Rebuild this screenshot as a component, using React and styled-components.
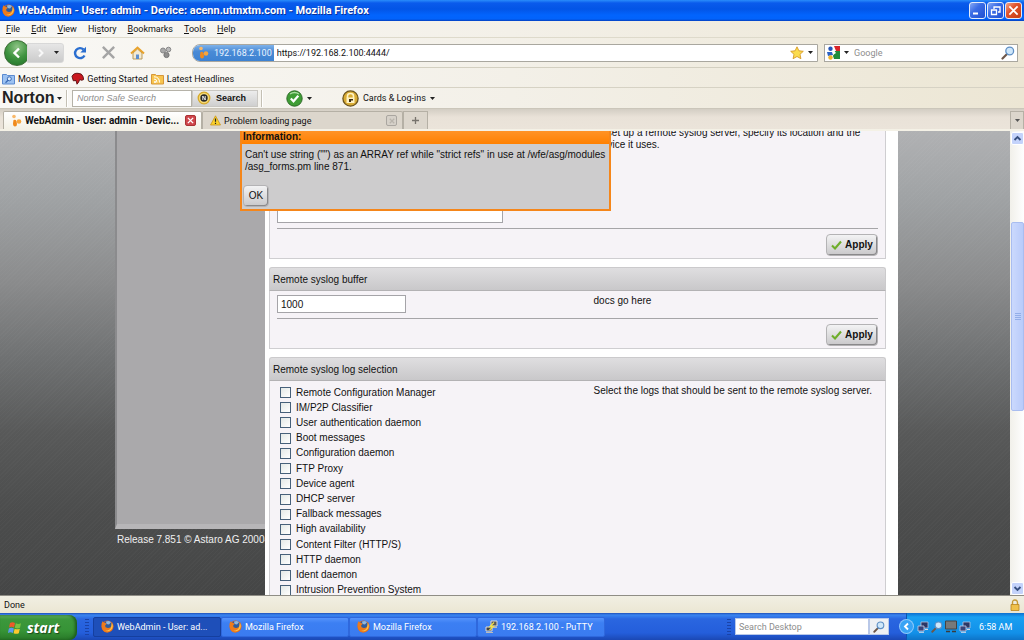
import React from "react";
import styled, { createGlobalStyle, css } from "styled-components";

const UI = `Roboto, "Liberation Sans", sans-serif`;
const WEB = `"Liberation Sans", Arial, sans-serif`;

const Global = createGlobalStyle`
  * { box-sizing: border-box; }
  body { margin: 0; font: 9px/12px ${UI}; color: #111; overflow: hidden; }
  button, input { font: inherit; color: inherit; margin: 0; }
  button { padding: 0; border: 0; background: none; display: inline-flex; align-items: center; white-space: nowrap; }
  svg { display: block; flex: none; }
  a { color: inherit; text-decoration: none; }
`;

/* ---------- window ---------- */
const Window = styled.div`
  display: flex;
  flex-direction: column;
  height: 100vh;
  background: #ece9d8;
`;
const TitleBar = styled.header`
  display: flex;
  align-items: center;
  gap: 3px;
  flex: none;
  height: 21px;
  padding: 0 2px;
  background: linear-gradient(#2a8dfb 0, #0a5bec 3px, #0355e6 9px, #0264fd 15px, #0263fb 19px, #0440c0 21px);
`;
const WindowTitle = styled.h1`
  flex: 1;
  margin: 0;
  font: bold 11px/14px ${UI};
  color: #fff;
  text-shadow: 1px 1px 0 #0a2f9a;
`;
const WindowButton = styled.button`
  justify-content: center;
  width: 17px;
  height: 17px;
  margin-left: -2px;
  border: 1px solid #e4ecfb;
  border-radius: 3px;
  background: ${(p) =>
    p.$close
      ? "linear-gradient(135deg, #f0a58b, #e0532b 40%, #c63c12)"
      : "linear-gradient(135deg, #86a8f4, #3a6ce6 40%, #1f4fd0)"};
`;

/* ---------- browser bars ---------- */
const chrome = css`
  background: linear-gradient(90deg, #f9f8f5, #f3f0e8 50%, #ece6d4);
`;
const MenuBar = styled.nav`
  ${chrome}
  display: flex;
  align-items: center;
  gap: 11px;
  flex: none;
  height: 17px;
  padding: 0 6px;
  border-bottom: 1px solid #dedacb;
`;
const NavBar = styled.div`
  ${chrome}
  display: flex;
  align-items: center;
  flex: none;
  height: 30px;
  padding: 0 6px 0 4px;
  border-bottom: 1px solid #d3cfc0;
`;
const BackForward = styled.div`
  display: flex;
  align-items: center;
  width: 60px;
  margin-right: 9px;
`;
const BackButton = styled.button`
  justify-content: center;
  width: 26px;
  height: 26px;
  border: 1px solid #3b6b35;
  border-radius: 50%;
  background: radial-gradient(circle at 50% 25%, #8fc486, #3f9440 50%, #1f7026);
`;
const ForwardButton = styled.button`
  flex: 1;
  justify-content: space-between;
  height: 20px;
  margin-left: -3px;
  padding: 0 4px 0 9px;
  border: 1px solid #d8d8d8;
  border-radius: 0 3px 3px 0;
  background: linear-gradient(#e6e6e6, #cbcbcb);
`;
const NavTools = styled.div`
  display: flex;
  align-items: center;
  gap: 14px;
  margin-right: 20px;
`;
const UrlBar = styled.div`
  display: flex;
  align-items: center;
  flex: 1;
  height: 18px;
  border: 1px solid #a9a79f;
  border-radius: 8px 0 0 8px;
  background: #fff;
  overflow: hidden;
`;
const SiteIdentity = styled.button`
  gap: 5px;
  height: 16px;
  padding: 0 2px 0 5px;
  color: #e9f3ff;
  background: linear-gradient(#7fb2ea, #4a8bd6 40%, #3d82d2);
`;
const UrlInput = styled.input`
  flex: 1;
  min-width: 0;
  padding: 0 3px;
  border: 0;
  background: none;
`;
const DropButton = styled.button`
  padding: 4px;
`;
const SearchBox = styled.div`
  display: flex;
  align-items: center;
  flex: 0 0 194px;
  height: 18px;
  margin-left: 6px;
  padding: 0 2px;
  border: 1px solid #a9a79f;
  background: #fff;
`;
const SearchInput = styled.input`
  flex: 1;
  min-width: 0;
  padding: 0 1px;
  border: 0;
  background: none;
  &::placeholder { color: #8d8d8d; opacity: 1; }
`;
const BookmarkBar = styled.nav`
  ${chrome}
  display: flex;
  align-items: center;
  gap: 3px;
  flex: none;
  height: 20px;
  padding: 2px 2px 0;
  border-bottom: 1px solid #d6d2c4;
`;
const Bookmark = styled.a`
  display: flex;
  align-items: center;
  gap: 3px;
`;
const NortonBar = styled.div`
  ${chrome}
  display: flex;
  align-items: center;
  flex: none;
  height: 21px;
  padding: 0 2px;
  border-bottom: 1px solid #cbc6ba;
`;
const NortonLogo = styled.button`
  gap: 3px;
  width: 64px;
  font: bold 16px/18px ${WEB};
  color: #222;
`;
const Divider = styled.span`
  flex: none;
  width: 2px;
  height: 17px;
  border-left: 1px solid #c4c0b4;
  border-right: 1px solid #fff;
`;
const SafeSearch = styled.input`
  width: 120px;
  height: 17px;
  margin-left: 4px;
  padding: 0 4px;
  border: 1px solid #b5b2a8;
  background: #fff;
  font: italic 9px/12px ${WEB};
  &::placeholder { color: #8d8d8d; opacity: 1; }
`;
const SafeButton = styled.button`
  gap: 5px;
  width: 66px;
  height: 17px;
  margin-right: 3px;
  padding: 0 4px;
  border: 1px solid #c9c7c2;
  background: linear-gradient(#ececec, #cfcfcf);
  font: bold 9px/12px ${WEB};
`;
const NortonItem = styled.button`
  gap: 4px;
  margin-left: ${(p) => p.$gap}px;
`;

/* ---------- tabs ---------- */
const TabStrip = styled.div`
  display: flex;
  align-items: flex-end;
  flex: none;
  height: 22px;
  padding: 2px 0 0 3px;
  border-bottom: 2px solid #f4f1e6;
  background: linear-gradient(#d3cec4, #e9e2d8 8px, #ebe4da);
`;
const Tab = styled.div`
  display: flex;
  align-items: center;
  gap: 3px;
  width: ${(p) => (p.$active ? 199 : 201)}px;
  height: 18px;
  padding: 0 5px 0 7px;
  border: 1px solid #b5b0a5;
  border-bottom: 0;
  border-radius: 2px 2px 0 0;
  background: ${(p) => (p.$active ? "linear-gradient(#fff, #f4f1e6)" : "#dcd6cc")};
  font: ${(p) => (p.$active ? "bold 10px/12px" : "9px/12px")} ${UI};
`;
const TabLabel = styled.button`
  flex: 1;
  font: inherit;
`;
const CloseTab = styled.button`
  justify-content: center;
  width: 11px;
  height: 11px;
  border: 1px solid ${(p) => (p.$active ? "#a33" : "#aaa6a0")};
  border-radius: 2px;
  background: ${(p) => (p.$active ? "#d0464c" : "#d6d1c9")};
`;
const StripButton = styled.button`
  justify-content: center;
  width: ${(p) => p.$w}px;
  height: 18px;
  border: 1px solid #b5b0a5;
  border-bottom: 0;
  background: #dcd6cc;
`;
const Push = styled.span`
  flex: 1;
`;

/* ---------- web page ---------- */
const Viewport = styled.div`
  display: flex;
  flex: 1;
  min-height: 0;
  overflow: hidden;
`;
const WebPage = styled.div`
  position: relative;
  display: flex;
  justify-content: center;
  flex: 1;
  padding: 0 112px 0 115px;
  overflow: hidden;
  font: 10px/12px ${WEB};
  color: #111;
  background:
    repeating-linear-gradient(135deg, rgba(255, 255, 255, 0.02) 0 1px, transparent 1px 3px),
    linear-gradient(#b0b1b3, #a0a3a5 14%, #8b8c8d 32%, #6f7172 49%, #585959 65%, #4c4d4d 82%, #454646);
`;
const Sidebar = styled.aside`
  flex: 0 0 150px;
  min-width: 0;
  color: #f0f0f0;
  white-space: nowrap;
`;
const SidebarPanel = styled.div`
  height: 398px;
  margin-bottom: 5px;
  border-left: 2px solid #8b8b8d;
  border-bottom: 5px solid #b7b6b8;
  background: #aaa9ab;
`;
const Release = styled.p`
  margin: 0 0 0 2px;
`;
const Main = styled.main`
  display: flex;
  flex-direction: column;
  gap: 8px;
  flex: 1;
  min-width: 0;
  margin-top: -8px;
  padding: 0 12px 0 4px;
  background: #fff;
`;
const Panel = styled.section`
  flex: none;
`;
const PanelTitle = styled.h2`
  height: 24px;
  margin: 0;
  padding: 6px 3px;
  border: 1px solid #cbcacc;
  border-bottom-color: #b3b2b4;
  border-radius: 3px 3px 0 0;
  background: linear-gradient(#dfdee0, #c9c8ca);
  font: 10px/12px ${WEB};
`;
const PanelBody = styled.div`
  padding: 0 7px;
  border: 1px solid #cfced1;
  border-top: 0;
  background: #f6f3f7;
`;
const Fields = styled.div`
  display: grid;
  grid-template-columns: 79fr 71fr;
  min-height: ${(p) => p.$min || 0}px;
  padding: 4px 0 5px;
`;
const Help = styled.p`
  margin: 0;
`;
const TextInput = styled.input`
  align-self: end;
  width: ${(p) => p.$w}px;
  height: 18px;
  padding: 0 3px;
  border: 1px solid #a5a4a8;
  background: #fff;
`;
const PanelFooter = styled.footer`
  display: flex;
  justify-content: flex-end;
  padding: 5px 0 2px;
  border-top: 1px solid #a6a5a8;
`;
const webButton = css`
  justify-content: center;
  gap: 3px;
  height: 22px;
  border: 1px solid #b4b3b5;
  border-radius: 4px;
  box-shadow: inset -1px -1px 0 #8a898b;
  background: linear-gradient(#f3f3f4, #c9c8ca);
`;
const ApplyButton = styled.button`
  ${webButton}
  width: 52px;
  font-weight: bold;
`;
const OkButton = styled.button`
  ${webButton}
  width: 26px;
`;
const LogList = styled.ul`
  display: flex;
  flex-direction: column;
  justify-content: space-between;
  height: 213px;
  margin: 0;
  padding: 0 0 0 3px;
  list-style: none;
`;
const LogRow = styled.label`
  display: flex;
  align-items: center;
  gap: 5px;
  height: 15px;
`;
const CheckBox = styled.input`
  appearance: none;
  width: 11px;
  height: 11px;
  border: 1px solid #46607a;
  background: linear-gradient(135deg, #e3e8e6, #fff);
`;
const Dialog = styled.div`
  position: absolute;
  top: 0;
  left: 240px;
  min-width: 371px;
  border: 2px solid #f5861a;
  border-top: 0;
  background: #cdcccd;
  white-space: nowrap;
`;
const DialogTitle = styled.h2`
  height: 13px;
  margin: 0;
  padding: 0 1px;
  background: linear-gradient(#ff9326, #ff8000);
  font: bold 10px/11px ${WEB};
`;
const DialogBody = styled.div`
  padding: 5px 1px 2px;
`;
const DialogText = styled.p`
  margin: 0 0 12px;
  padding: 0 0 0 2px;
`;

/* ---------- scroll bar ---------- */
const ScrollBar = styled.div`
  display: flex;
  flex-direction: column;
  flex: 0 0 14px;
  padding: 1px 0 0 1px;
  background: linear-gradient(90deg, #f1f0ea, #fefefe);
`;
const ScrollButton = styled.button`
  justify-content: center;
  flex: none;
  width: 13px;
  height: 13px;
  border: 1px solid #fff;
  border-radius: 2px;
  background: #c4d3fb;
`;
const ScrollSpace = styled.span`
  flex: ${(p) => p.$grow} 0 0;
`;
const ScrollThumb = styled.div`
  display: flex;
  align-items: center;
  justify-content: center;
  flex: 188 0 0;
  border: 1px solid #a9bdf0;
  border-radius: 2px;
  background: linear-gradient(90deg, #cbd9fd, #b9cbfa);
`;

/* ---------- status bar and task bar ---------- */
const StatusBar = styled.footer`
  display: flex;
  align-items: center;
  justify-content: space-between;
  flex: none;
  height: 18px;
  padding: 0 4px;
  border-top: 1px solid #8f8d85;
  background: linear-gradient(#f1efe3, #ebe6d3);
`;
const TaskBar = styled.div`
  display: flex;
  align-items: center;
  flex: none;
  height: 27px;
  color: #fff;
  background: linear-gradient(#1f50b8 0, #3a85f0 2px, #2a66e0 6px, #245edb 20px, #1b48b4);
`;
const StartButton = styled.button`
  gap: 5px;
  width: 77px;
  height: 25px;
  align-self: flex-end;
  padding: 0 8px;
  border-radius: 0 8px 8px 0;
  background: linear-gradient(#64b364 0, #3c983c 4px, #369336 16px, #287828);
  box-shadow: inset -2px 0 3px #1c5a1c;
  font: italic bold 14px/16px "Open Sans", sans-serif;
  text-shadow: 1px 1px 1px #1a4a1a;
`;
const Grip = styled.span`
  flex: none;
  width: 4px;
  height: 16px;
  margin: 0 4px 0 8px;
  background: repeating-linear-gradient(#1a43a8 0 1px, transparent 1px 3px);
`;
const Task = styled.button`
  gap: 3px;
  flex: 0 1 128px;
  height: 20px;
  padding: 0 7px;
  border: 1px solid ${(p) => (p.$active ? "#153f9f" : "#2f68dd")};
  border-radius: 2px;
  background: ${(p) => (p.$active ? "#1e4fb9" : "linear-gradient(#5593fb, #3c7ff3 5px, #3a7bf0)")};
`;
const DesktopSearch = styled.div`
  display: flex;
  height: 17px;
`;
const DesktopInput = styled.input`
  width: 134px;
  padding: 0 3px;
  border: 1px solid #b9c8e8;
  background: #fff;
  color: #333;
  &::placeholder { color: #8d8d8d; opacity: 1; }
`;
const DesktopButton = styled.button`
  justify-content: center;
  width: 20px;
  border: 1px solid #b9c8e8;
  background: #eef0f4;
`;
const Tray = styled.div`
  display: flex;
  align-items: center;
  gap: 2px;
  align-self: stretch;
  width: 118px;
  margin-left: 17px;
  border-left: 1px solid #0d55b0;
  background: linear-gradient(#0d6fd0 0, #19a0f2 4px, #1290e8 20px, #0e74c8);
`;
const TrayToggle = styled.button`
  justify-content: center;
  width: 13px;
  height: 13px;
  margin-left: -7px;
  margin-right: 2px;
  border-radius: 50%;
  background: #38a3f5;
  box-shadow: 0 0 0 1px #8cc9fa;
`;
const Clock = styled.time`
  margin-left: 6px;
`;

/* ---------- icons ---------- */
const Caret = ({ c = "#222" }) => (
  <svg width="5" height="3" viewBox="0 0 5 3"><path d="M0 0h5L2.500 3z" fill={c} /></svg>
);
const Firefox = () => (
  <svg width="13" height="13" viewBox="0 0 13 13">
    <circle cx="6.500" cy="6.500" r="6" fill="#e2651a" />
    <circle cx="6.800" cy="5" r="3.900" fill="#2f5c9c" />
    <path d="M5 1.500q3-1.300 5 .8L8 4.500 5.500 4z" fill="#8fb6dd" />
    <path d="M.6 3.500 1.800 1l1 1.800q2 0 2.800 1.200L4.300 5.200q-.6 2 1.700 2.600Q8.500 9 11 5.500l.3-2.800q2.200 4.200-.5 7.400Q8 13.300 3.700 12 .2 10 .6 3.500z" fill="#ed7b1c" />
    <path d="M10.800 2.800q2.200 4.200-1 7.200-3 2.300-6 .6 5 .4 6.300-3.400z" fill="#fbc34a" />
  </svg>
);
const Blobs = () => (
  <svg width="11" height="13" viewBox="0 0 11 13">
    <circle cx="3" cy="2.500" r="1.800" fill="#f9b86a" />
    <path d="M2.500 6q2-1 3 1l.5 3q0 2.500-2 2.500T2 9.500z" fill="#f08a1d" />
    <circle cx="8" cy="7.500" r="2.300" fill="#f7a53d" />
  </svg>
);
const Magnifier = ({ s = 14 }) => (
  <svg width={s} height={s} viewBox="0 0 14 14">
    <path d="M6 8 1.500 12.500" stroke="#6d5648" strokeWidth="2.200" strokeLinecap="round" />
    <circle cx="8.700" cy="5" r="3.900" fill="#cfe7fa" stroke="#5f8fc4" strokeWidth="1.300" />
  </svg>
);
const Monitors = () => (
  <svg width="12" height="12" viewBox="0 0 12 12">
    <path d="M4 1h7v6H4z" fill="#2b3766" stroke="#b9c4e0" strokeWidth=".8" />
    <path d="M1 5h6v5H1z" fill="#37447a" stroke="#c9d1ea" strokeWidth=".8" />
    <path d="M2 11.300h5M8 8.500h3" stroke="#d5d9e6" />
  </svg>
);
const Tick = () => (
  <svg width="11" height="10" viewBox="0 0 11 10"><path d="M1 5.500 4 8.500 10 1.500" fill="none" stroke="#6fae2b" strokeWidth="2.100" /></svg>
);
const Cross = ({ s = 7, c = "#fff", w = 1.6 }) => (
  <svg width={s} height={s} viewBox="0 0 8 8"><path d="M1 1l6 6M7 1 1 7" stroke={c} strokeWidth={w} /></svg>
);
const Chevron = ({ d, c = "#38507f" }) => (
  <svg width="9" height="9" viewBox="0 0 9 9"><path d={d} fill="none" stroke={c} strokeWidth="1.900" /></svg>
);

const Apply = () => (
  <ApplyButton type="button"><Tick />Apply</ApplyButton>
);

const menus = ["File", "Edit", "View", "History", "Bookmarks", "Tools", "Help"];
const logs = [
  "Remote Configuration Manager", "IM/P2P Classifier", "User authentication daemon", "Boot messages",
  "Configuration daemon", "FTP Proxy", "Device agent", "DHCP server", "Fallback messages",
  "High availability", "Content Filter (HTTP/S)", "HTTP daemon", "Ident daemon", "Intrusion Prevention System",
];
const Mnemonic = ({ text }) => {
  const at = text === "History" ? 2 : 0;
  return <span>{text.slice(0, at)}<u>{text[at]}</u>{text.slice(at + 1)}</span>;
};

export default function App() {
  return (
    <Window>
      <Global />
      <TitleBar>
        <Firefox />
        <WindowTitle>WebAdmin - User: admin - Device: acenn.utmxtm.com - Mozilla Firefox</WindowTitle>
        <WindowButton aria-label="Minimize">
          <svg width="11" height="11" viewBox="0 0 11 11"><path d="M1 8.500h5" stroke="#fff" strokeWidth="2" /></svg>
        </WindowButton>
        <WindowButton aria-label="Restore">
          <svg width="11" height="11" viewBox="0 0 11 11">
            <path d="M4 4V2h6v5H8" fill="none" stroke="#fff" strokeWidth="1.300" />
            <path d="M1.500 5h5v4.500h-5z" fill="none" stroke="#fff" strokeWidth="1.300" />
          </svg>
        </WindowButton>
        <WindowButton $close aria-label="Close"><Cross s={11} w={1.3} /></WindowButton>
      </TitleBar>

      <MenuBar>
        {menus.map((m) => <button key={m} type="button"><Mnemonic text={m} /></button>)}
      </MenuBar>

      <NavBar>
        <BackForward>
          <BackButton aria-label="Back">
            <svg width="12" height="12" viewBox="0 0 12 12"><path d="M8 1.500 3.500 6 8 10.500" fill="none" stroke="#fff" strokeWidth="2.400" /></svg>
          </BackButton>
          <ForwardButton aria-label="Forward">
            <svg width="8" height="10" viewBox="0 0 8 10"><path d="M2 1.500 5.500 5 2 8.500" fill="none" stroke="#f8f8f8" strokeWidth="2" /></svg>
            <Caret />
          </ForwardButton>
        </BackForward>
        <NavTools>
          <button aria-label="Reload">
            <svg width="14" height="14" viewBox="0 0 14 14">
              <path d="M11.500 9.500A5 5 0 1 1 10.500 3.500" fill="none" stroke="#2b6fd0" strokeWidth="2.400" />
              <path d="M13 .8V6.500H7.300z" fill="#2b6fd0" />
            </svg>
          </button>
          <button aria-label="Stop"><Cross s={15} c="#a5a5a5" w={1.3} /></button>
          <button aria-label="Home">
            <svg width="15" height="14" viewBox="0 0 15 14">
              <path d="M3 7v6h9V7L7.500 3z" fill="#f4ead2" stroke="#b79a5c" />
              <path d="M1 7.500 7.500 1.500 14 7.500" fill="none" stroke="#e9a32c" strokeWidth="1.900" />
              <path d="M6 8.500h3V13H6z" fill="#5d8fd0" />
            </svg>
          </button>
          <button aria-label="Add-ons">
            <svg width="13" height="13" viewBox="0 0 13 13">
              <circle cx="4" cy="4.500" r="2.500" fill="#a9a9a9" stroke="#888" />
              <circle cx="9.500" cy="3.500" r="2.300" fill="#b9b9b9" stroke="#888" />
              <circle cx="7.500" cy="9" r="2.600" fill="#8e8e8e" stroke="#777" />
            </svg>
          </button>
        </NavTools>
        <UrlBar>
          <SiteIdentity type="button"><Blobs />192.168.2.100</SiteIdentity>
          <UrlInput aria-label="Address" defaultValue="https://192.168.2.100:4444/" />
          <button aria-label="Bookmark this page">
            <svg width="14" height="14" viewBox="0 0 14 14">
              <path d="m7 .8 1.900 4 4.400.5-3.300 3 .9 4.400L7 10.500l-3.900 2.200.9-4.400-3.300-3 4.400-.5z" fill="#fbdc4e" stroke="#d79a26" strokeWidth=".9" />
            </svg>
          </button>
          <DropButton aria-label="Show history"><Caret /></DropButton>
        </UrlBar>
        <SearchBox>
          <svg width="13" height="14" viewBox="0 0 13 14">
            <path d="M7 0h6v6L9 5z" fill="#d9252a" />
            <path d="M7.500 5 13 5v8H7l-1-3z" fill="#1f8b3b" />
            <circle cx="3.500" cy="2.800" r="2.200" fill="#2556b8" />
            <path d="M0 6l5 0 1 3-5 1z" fill="#2b62c4" />
            <circle cx="3.500" cy="11.500" r="2.200" fill="#f0b429" />
            <path d="M6 3l3 4-3 2z" fill="#fff" />
          </svg>
          <DropButton aria-label="Choose search engine"><Caret /></DropButton>
          <SearchInput aria-label="Search" placeholder="Google" />
          <button aria-label="Go"><Magnifier /></button>
        </SearchBox>
      </NavBar>

      <BookmarkBar>
        <Bookmark href="#most">
          <svg width="13" height="12" viewBox="0 0 13 12">
            <path d="M.5 1.500h4l1 1h7v8.500H.5z" fill="#9cc2f2" stroke="#5b8ad0" />
            <circle cx="7.300" cy="5.800" r="2" fill="#dcebfc" stroke="#3969b4" />
            <path d="M6 7.200 3.500 9.800" stroke="#3969b4" strokeWidth="1.300" />
          </svg>
          Most Visited
        </Bookmark>
        <Bookmark href="#start">
          <svg width="13" height="13" viewBox="0 0 13 13">
            <path d="M1 4.500Q2.500.8 7 1.300q4 0 5 3.200l.7 3-2 .8-2-.8-1 2.500-1.700 2.200-1-3.700-2.700.3z" fill="#c9181e" stroke="#5a0d10" strokeWidth=".9" />
          </svg>
          Getting Started
        </Bookmark>
        <Bookmark href="#news">
          <svg width="13" height="12" viewBox="0 0 13 12">
            <path d="M.5 1.500h4l1 1h7v8.500H.5z" fill="#f8c54f" stroke="#d6973a" />
            <circle cx="4" cy="9" r="1" fill="#fff" />
            <path d="M3 6q3 0 3 3.500M3 3.800q5.500 0 5.500 5.700" fill="none" stroke="#fff" />
          </svg>
          Latest Headlines
        </Bookmark>
      </BookmarkBar>

      <NortonBar>
        <NortonLogo type="button">Norton<Caret /></NortonLogo>
        <Divider />
        <SafeSearch aria-label="Norton Safe Search" placeholder="Norton Safe Search" />
        <SafeButton type="button">
          <svg width="14" height="14" viewBox="0 0 14 14">
            <circle cx="7" cy="7" r="5.800" fill="#f5d977" stroke="#d7a928" strokeWidth="1.300" />
            <circle cx="7" cy="7" r="3.700" fill="#2a2a2a" />
            <path d="M5.800 9V5l2.400 4V5" fill="none" stroke="#fff" strokeWidth=".9" />
          </svg>
          Search
        </SafeButton>
        <Divider />
        <NortonItem $gap={23} aria-label="Site safety">
          <svg width="17" height="17" viewBox="0 0 17 17">
            <circle cx="8.500" cy="8.500" r="7.700" fill="#3f9d35" stroke="#2c6a26" />
            <path d="M4 4q4.500-3 9 0" stroke="#a9dba0" strokeWidth="1.300" fill="none" />
            <path d="M4.800 8.500 7.500 11.300 12.300 5.800" fill="none" stroke="#fff" strokeWidth="2.200" />
          </svg>
          <Caret />
        </NortonItem>
        <NortonItem $gap={30} type="button">
          <svg width="17" height="17" viewBox="0 0 17 17">
            <circle cx="8.500" cy="8.500" r="7.600" fill="#d9ac35" stroke="#6b531b" strokeWidth="1.300" />
            <path d="M5.500 8V6q0-2.500 3-2.500t3 2.500v2" fill="none" stroke="#fff3c4" strokeWidth="1.600" />
            <path d="M4.500 7.500h8v5.500h-8z" fill="#fff3c4" />
            <path d="M7 9h4v1.500H9V12H7z" fill="#3a2b14" />
          </svg>
          Cards &amp; Log-ins
          <Caret />
        </NortonItem>
      </NortonBar>

      <TabStrip>
        <Tab $active>
          <Blobs />
          <TabLabel type="button">WebAdmin - User: admin - Devic...</TabLabel>
          <CloseTab $active aria-label="Close tab"><Cross s={7} /></CloseTab>
        </Tab>
        <Tab>
          <svg width="11" height="11" viewBox="0 0 11 11">
            <path d="M5.500.8 10.500 10H.5z" fill="#fbd12c" stroke="#c9951a" strokeWidth=".8" />
            <path d="M5.500 3.500v3.300M5.500 7.700V9" stroke="#222" strokeWidth="1.200" />
          </svg>
          <TabLabel type="button">Problem loading page</TabLabel>
          <CloseTab aria-label="Close tab"><Cross s={6} c="#b9b4ac" /></CloseTab>
        </Tab>
        <StripButton $w={25} aria-label="New tab">
          <svg width="9" height="9" viewBox="0 0 9 9"><path d="M4.500 1v7M1 4.500h7" stroke="#77736c" strokeWidth="1.300" /></svg>
        </StripButton>
        <Push />
        <StripButton $w={14} aria-label="List all tabs"><Caret c="#555" /></StripButton>
      </TabStrip>

      <Viewport>
        <WebPage>
          <Sidebar>
            <SidebarPanel />
            <Release>Release 7.851 © Astaro AG 2000-</Release>
          </Sidebar>
          <Main>
            <Panel>
              <PanelBody>
                <Fields $min={105}>
                  <TextInput $w={226} aria-label="Remote syslog server" />
                  <Help>To set up a remote syslog server, specify its location and the service it uses.</Help>
                </Fields>
                <PanelFooter><Apply /></PanelFooter>
              </PanelBody>
            </Panel>
            <Panel>
              <PanelTitle>Remote syslog buffer</PanelTitle>
              <PanelBody>
                <Fields>
                  <TextInput $w={129} aria-label="Remote syslog buffer" defaultValue="1000" />
                  <Help>docs go here</Help>
                </Fields>
                <PanelFooter><Apply /></PanelFooter>
              </PanelBody>
            </Panel>
            <Panel>
              <PanelTitle>Remote syslog log selection</PanelTitle>
              <PanelBody>
                <Fields>
                  <LogList>
                    {logs.map((l) => (
                      <li key={l}><LogRow><CheckBox type="checkbox" />{l}</LogRow></li>
                    ))}
                  </LogList>
                  <Help>Select the logs that should be sent to the remote syslog server.</Help>
                </Fields>
              </PanelBody>
            </Panel>
          </Main>
          <Dialog role="dialog" aria-labelledby="info-title">
            <DialogTitle id="info-title">Information:</DialogTitle>
            <DialogBody>
              <DialogText>
                Can't use string ("") as an ARRAY ref while "strict refs" in use at /wfe/asg/modules<br />
                /asg_forms.pm line 871.
              </DialogText>
              <OkButton type="button">OK</OkButton>
            </DialogBody>
          </Dialog>
        </WebPage>
        <ScrollBar>
          <ScrollButton aria-label="Scroll up"><Chevron d="M1.500 6 4.500 3l3 3" /></ScrollButton>
          <ScrollSpace $grow={77} />
          <ScrollThumb>
            <svg width="6" height="7" viewBox="0 0 6 7"><path d="M0 .5h6M0 2.500h6M0 4.500h6M0 6.500h6" stroke="#93aee8" /></svg>
          </ScrollThumb>
          <ScrollSpace $grow={172} />
          <ScrollButton aria-label="Scroll down"><Chevron d="M1.500 3 4.500 6l3-3" /></ScrollButton>
        </ScrollBar>
      </Viewport>

      <StatusBar>
        Done
        <svg width="10" height="12" viewBox="0 0 10 12">
          <path d="M2.500 6V3.500q0-2.500 2.500-2.500t2.500 2.500V6" fill="none" stroke="#c79a35" strokeWidth="1.400" />
          <path d="M1 5.500h8v6H1z" fill="#efc04a" stroke="#b98420" strokeWidth=".8" />
        </svg>
      </StatusBar>

      <TaskBar>
        <StartButton type="button">
          <svg width="14" height="14" viewBox="0 0 14 14">
            <path d="M2 2q2.500-1.500 5 0L6 6.500q-2.500-1.300-5 0z" fill="#ee5a2a" />
            <path d="M7.800 2.300q2.500 1.300 5.200 0L12 6.800q-2.500 1.300-5.200 0z" fill="#7cc242" />
            <path d="M.9 7.400q2.500-1.500 5 0L4.900 12q-2.500-1.300-5 0z" fill="#5a9bee" />
            <path d="M6.600 7.700q2.500 1.300 5.200 0l-1 4.500q-2.500 1.300-5.200 0z" fill="#fbc92e" />
          </svg>
          start
        </StartButton>
        <Grip />
        <Task $active type="button"><Firefox />WebAdmin - User: ad...</Task>
        <Task type="button"><Firefox />Mozilla Firefox</Task>
        <Task type="button"><Firefox />Mozilla Firefox</Task>
        <Task type="button">
          <svg width="13" height="13" viewBox="0 0 13 13">
            <path d="M6 1h6v5H6z" fill="#555" stroke="#ddd" />
            <path d="M1 7h6v4H1z" fill="#444" stroke="#ddd" />
            <path d="M9 2.500 5 6.500h3.500L4.500 10" fill="none" stroke="#f3e14a" strokeWidth="1.300" />
            <path d="M1 12.500h7M8 7.500h4" stroke="#bbb" />
          </svg>
          192.168.2.100 - PuTTY
        </Task>
        <Push />
        <Grip />
        <DesktopSearch>
          <DesktopInput aria-label="Search Desktop" placeholder="Search Desktop" />
          <DesktopButton aria-label="Search"><Magnifier s={12} /></DesktopButton>
        </DesktopSearch>
        <Tray>
          <TrayToggle aria-label="Show hidden icons"><Chevron d="M6 1.500 3 4.500l3 3" c="#fff" /></TrayToggle>
          <Monitors />
          <Magnifier s={12} />
          <svg width="12" height="13" viewBox="0 0 12 13">
            <path d="M.5 1h11v8H.5z" fill="#77797a" stroke="#444" />
            <path d="M1 11.500h4M7 11.500h4" stroke="#3b3b3b" strokeWidth="1.600" />
          </svg>
          <Monitors />
          <Clock>6:58 AM</Clock>
        </Tray>
      </TaskBar>
    </Window>
  );
}
